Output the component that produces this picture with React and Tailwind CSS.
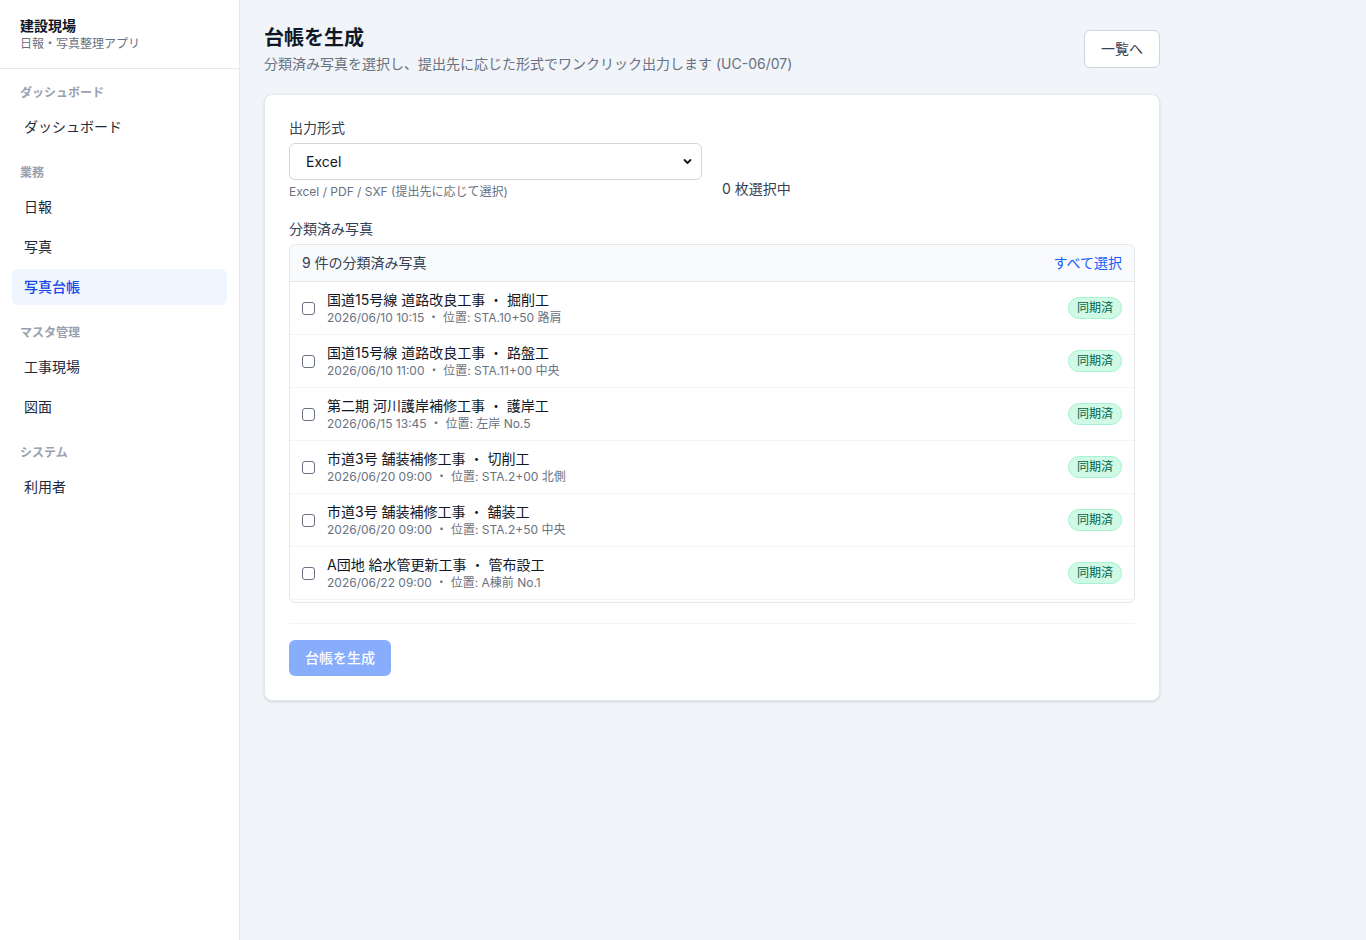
const photos = [
  { site: '国道15号線 道路改良工事', work: '掘削工', at: '2026/06/10 10:15', pos: 'STA.10+50 路肩' },
  { site: '国道15号線 道路改良工事', work: '路盤工', at: '2026/06/10 11:00', pos: 'STA.11+00 中央' },
  { site: '第二期 河川護岸補修工事', work: '護岸工', at: '2026/06/15 13:45', pos: '左岸 No.5' },
  { site: '市道3号 舗装補修工事', work: '切削工', at: '2026/06/20 09:00', pos: 'STA.2+00 北側' },
  { site: '市道3号 舗装補修工事', work: '舗装工', at: '2026/06/20 09:00', pos: 'STA.2+50 中央' },
  { site: 'A団地 給水管更新工事', work: '管布設工', at: '2026/06/22 09:00', pos: 'A棟前 No.1' },
  { site: 'A団地 給水管更新工事', work: '埋戻し工', at: '2026/06/22 10:30', pos: 'A棟前 No.2' },
  { site: '第二期 河川護岸補修工事', work: '根固め工', at: '2026/06/24 14:00', pos: '右岸 No.8' },
  { site: '国道15号線 道路改良工事', work: '側溝工', at: '2026/06/25 08:30', pos: 'STA.12+20 左側' },
]

const nav = [
  { label: 'ダッシュボード', items: ['ダッシュボード'] },
  { label: '業務', items: ['日報', '写真', '写真台帳'] },
  { label: 'マスタ管理', items: ['工事現場', '図面'] },
  { label: 'システム', items: ['利用者'] },
]

export default function App() {
  return (
    <div
      className="flex min-h-[940px] bg-[#f1f4f8] text-gray-900"
      style={{ fontFamily: 'Inter, "Noto Sans CJK JP", sans-serif' }}
    >
      <aside className="w-[240px] shrink-0 border-r border-gray-200 bg-white">
        <div className="border-b border-gray-200 px-5 pt-4 pb-4">
          <p className="text-sm font-bold leading-5 text-gray-900">建設現場</p>
          <p className="text-xs leading-4 text-gray-500">日報・写真整理アプリ</p>
        </div>
        <nav className="px-3 pt-4">
          {nav.map((group, gi) => (
            <div key={group.label} className={gi === 0 ? '' : 'mt-5'}>
              <p className="px-2 text-xs font-bold leading-4 text-gray-400">{group.label}</p>
              <div className="mt-2 space-y-1">
                {group.items.map((item) => (
                  <a
                    key={item}
                    className={
                      item === '写真台帳'
                        ? 'block h-9 rounded-md bg-blue-50 px-3 text-sm font-medium leading-[35px] text-blue-700'
                        : 'block h-9 rounded-md px-3 text-sm leading-[35px] text-gray-800'
                    }
                  >
                    {item}
                  </a>
                ))}
              </div>
            </div>
          ))}
        </nav>
      </aside>

      <main className="flex-1 px-6 pt-6">
        <div className="max-w-[896px]">
          <div className="flex items-start justify-between">
            <div>
              <h1 className="text-xl font-bold leading-7 text-gray-900">台帳を生成</h1>
              <p className="mt-0.5 text-sm leading-5 text-gray-500">
                分類済み写真を選択し、提出先に応じた形式でワンクリック出力します (UC-06/07)
              </p>
            </div>
            <button
              type="button"
              className="mt-[6px] h-[38px] rounded-md border border-gray-300 bg-white px-4 text-sm text-gray-700"
            >
              一覧へ
            </button>
          </div>

          <section className="mt-5 rounded-lg border border-gray-200 bg-white px-6 pt-[23px] pb-6 shadow-sm">
            <div className="grid grid-cols-2 gap-5">
              <div>
                <label className="block text-sm leading-5 text-gray-700">出力形式</label>
                <div className="relative mt-[5px]">
                  <select className="h-[37px] w-full appearance-none rounded-md border border-gray-300 bg-white pl-4 text-sm text-gray-900">
                    <option>Excel</option>
                    <option>PDF</option>
                    <option>SXF</option>
                  </select>
                  <svg
                    viewBox="0 0 12 12"
                    className="pointer-events-none absolute right-[10px] top-[14px] h-[9px] w-[9px] text-gray-900"
                    fill="none"
                    stroke="currentColor"
                    strokeWidth="2.4"
                    strokeLinecap="round"
                    strokeLinejoin="round"
                  >
                    <path d="M2 4l4 4 4-4" />
                  </svg>
                </div>
                <p className="mt-1 text-xs leading-4 text-gray-500">Excel / PDF / SXF (提出先に応じて選択)</p>
              </div>
              <div className="flex items-end pb-[1px]">
                <p className="text-sm leading-5 text-gray-700">0 枚選択中</p>
              </div>
            </div>

            <p className="mt-[19px] text-sm leading-5 text-gray-700">分類済み写真</p>
            <div className="mt-[5px] overflow-hidden rounded-md border border-gray-200">
              <div className="flex h-[37px] items-center justify-between border-b border-gray-200 bg-gray-50 px-3">
                <span className="text-sm text-gray-700">9 件の分類済み写真</span>
                <button type="button" className="text-sm text-blue-600">
                  すべて選択
                </button>
              </div>
              <ul className="max-h-[320px] divide-y divide-gray-100 overflow-y-auto [scrollbar-width:none]">
                {photos.map((p, i) => (
                  <li key={i} className="flex items-center gap-3 px-3 py-2">
                    <input
                      type="checkbox"
                      className="h-[13px] w-[13px] shrink-0 appearance-none rounded-[3px] border border-gray-500 bg-white"
                    />
                    <div className="min-w-0 flex-1">
                      <p className="text-sm leading-5 text-gray-900">
                        {p.site} ・ {p.work}
                      </p>
                      <p className="text-xs leading-4 text-gray-500">
                        {p.at} ・ 位置: {p.pos}
                      </p>
                    </div>
                    <span className="rounded-full border border-emerald-200 bg-emerald-100 px-2 py-[2px] text-xs leading-4 text-emerald-800">
                      同期済
                    </span>
                  </li>
                ))}
              </ul>
            </div>

            <div className="mt-5 border-t border-gray-100 pt-4">
              <button
                type="button"
                disabled
                className="h-9 rounded-md bg-blue-600 px-4 text-sm font-medium text-white opacity-50"
              >
                台帳を生成
              </button>
            </div>
          </section>
        </div>
      </main>
    </div>
  )
}
